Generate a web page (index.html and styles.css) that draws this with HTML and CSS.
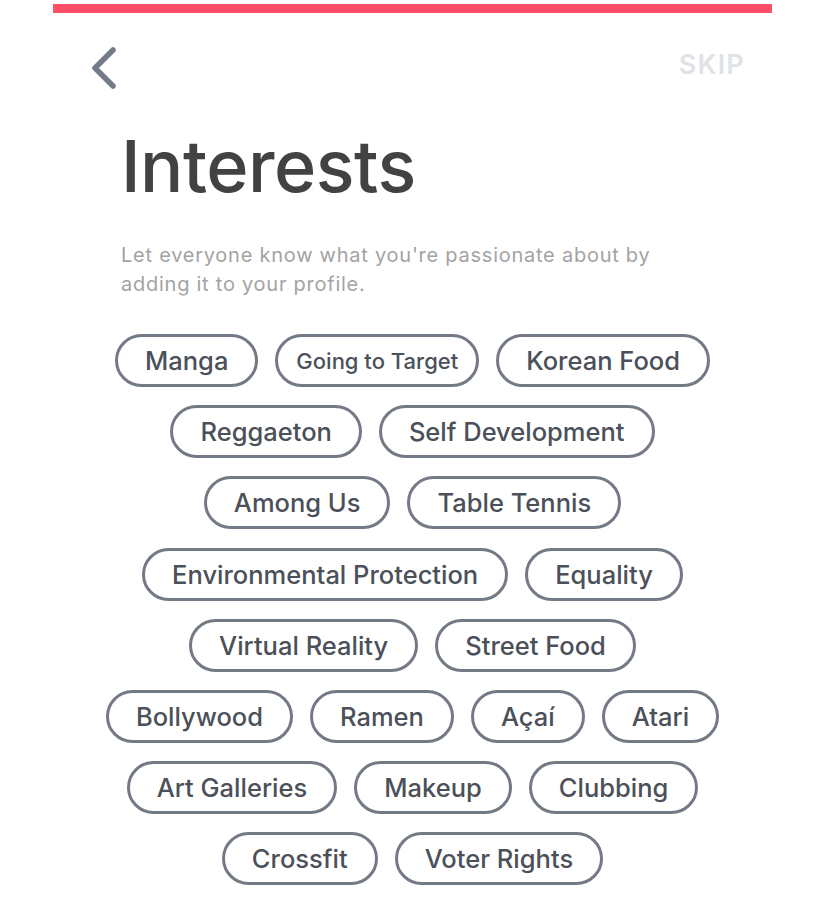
FILE: index.html
```html
<!DOCTYPE html>
<html lang="en">
<head>
<meta charset="utf-8">
<title>Interests</title>
<link rel="stylesheet" href="styles.css">
</head>
<body>
<div class="screen">
  <div class="progress"></div>
  <header class="topbar">
    <button class="back" aria-label="Back">
      <svg width="30" height="44" viewBox="0 0 30 44"><polyline points="24,4 6,22 24,40" fill="none" stroke="#737b88" stroke-width="5.5" stroke-linecap="round" stroke-linejoin="round"/></svg>
    </button>
    <span class="skip">SKIP</span>
  </header>
  <main class="content">
    <h1 class="title">Interests</h1>
    <p class="subtitle">Let everyone know what you're passionate about by adding it to your profile.</p>
    <div class="chips">
      <div class="row"><span class="chip">Manga</span><span class="chip small">Going to Target</span><span class="chip">Korean Food</span></div>
      <div class="row"><span class="chip">Reggaeton</span><span class="chip">Self Development</span></div>
      <div class="row"><span class="chip">Among Us</span><span class="chip">Table Tennis</span></div>
      <div class="row"><span class="chip">Environmental Protection</span><span class="chip">Equality</span></div>
      <div class="row"><span class="chip">Virtual Reality</span><span class="chip">Street Food</span></div>
      <div class="row"><span class="chip">Bollywood</span><span class="chip">Ramen</span><span class="chip">Açaí</span><span class="chip">Atari</span></div>
      <div class="row"><span class="chip">Art Galleries</span><span class="chip">Makeup</span><span class="chip">Clubbing</span></div>
      <div class="row"><span class="chip">Crossfit</span><span class="chip">Voter Rights</span></div>
    </div>
  </main>
</div>
</body>
</html>
```

FILE: styles.css
```css
* { box-sizing: border-box; }
html, body { margin: 0; padding: 0; background: #fff; }
body { font-family: "Inter", "Noto Sans", sans-serif; overflow: hidden; height: 903px; }

.screen {
  width: 719px;
  margin-left: 53px;
  padding-top: 4px;
}
.progress {
  height: 9px;
  background: #fd5068;
}
.topbar {
  display: flex;
  justify-content: space-between;
  align-items: center;
  padding: 27px 27px 0 36px;
  height: 80px;
}
.back {
  border: 0;
  background: none;
  padding: 0;
  display: flex;
  margin-top: 3px;
}
.skip {
  font-size: 27px;
  font-weight: 600;
  color: #dfe2e7;
  letter-spacing: 1.2px;
  margin-top: -4px;
}
.content {
  padding: 0 0 0 68px;
}
.title {
  margin: 29px 0 0 0;
  font-size: 72px;
  line-height: 88px;
  font-weight: 500;
  color: #424242;
  letter-spacing: -0.5px;
}
.subtitle {
  margin: 31px 0 0 0;
  width: 570px;
  font-size: 20px;
  line-height: 29px;
  letter-spacing: 0.75px;
  color: #a3a3a3;
}
.chips {
  margin: 35px 0 0 -68px;
  display: flex;
  flex-direction: column;
  gap: 18.2px;
}
.row {
  display: flex;
  justify-content: center;
  gap: 17px;
}
.chip {
  height: 53px;
  padding: 0 27px;
  border: 3px solid #737a86;
  border-radius: 27px;
  display: flex;
  align-items: center;
  font-size: 25.5px;
  font-weight: 500;
  color: #4b5059;
  white-space: nowrap;
}
.chip.small {
  font-size: 22px;
  padding: 0 18px;
}
```
